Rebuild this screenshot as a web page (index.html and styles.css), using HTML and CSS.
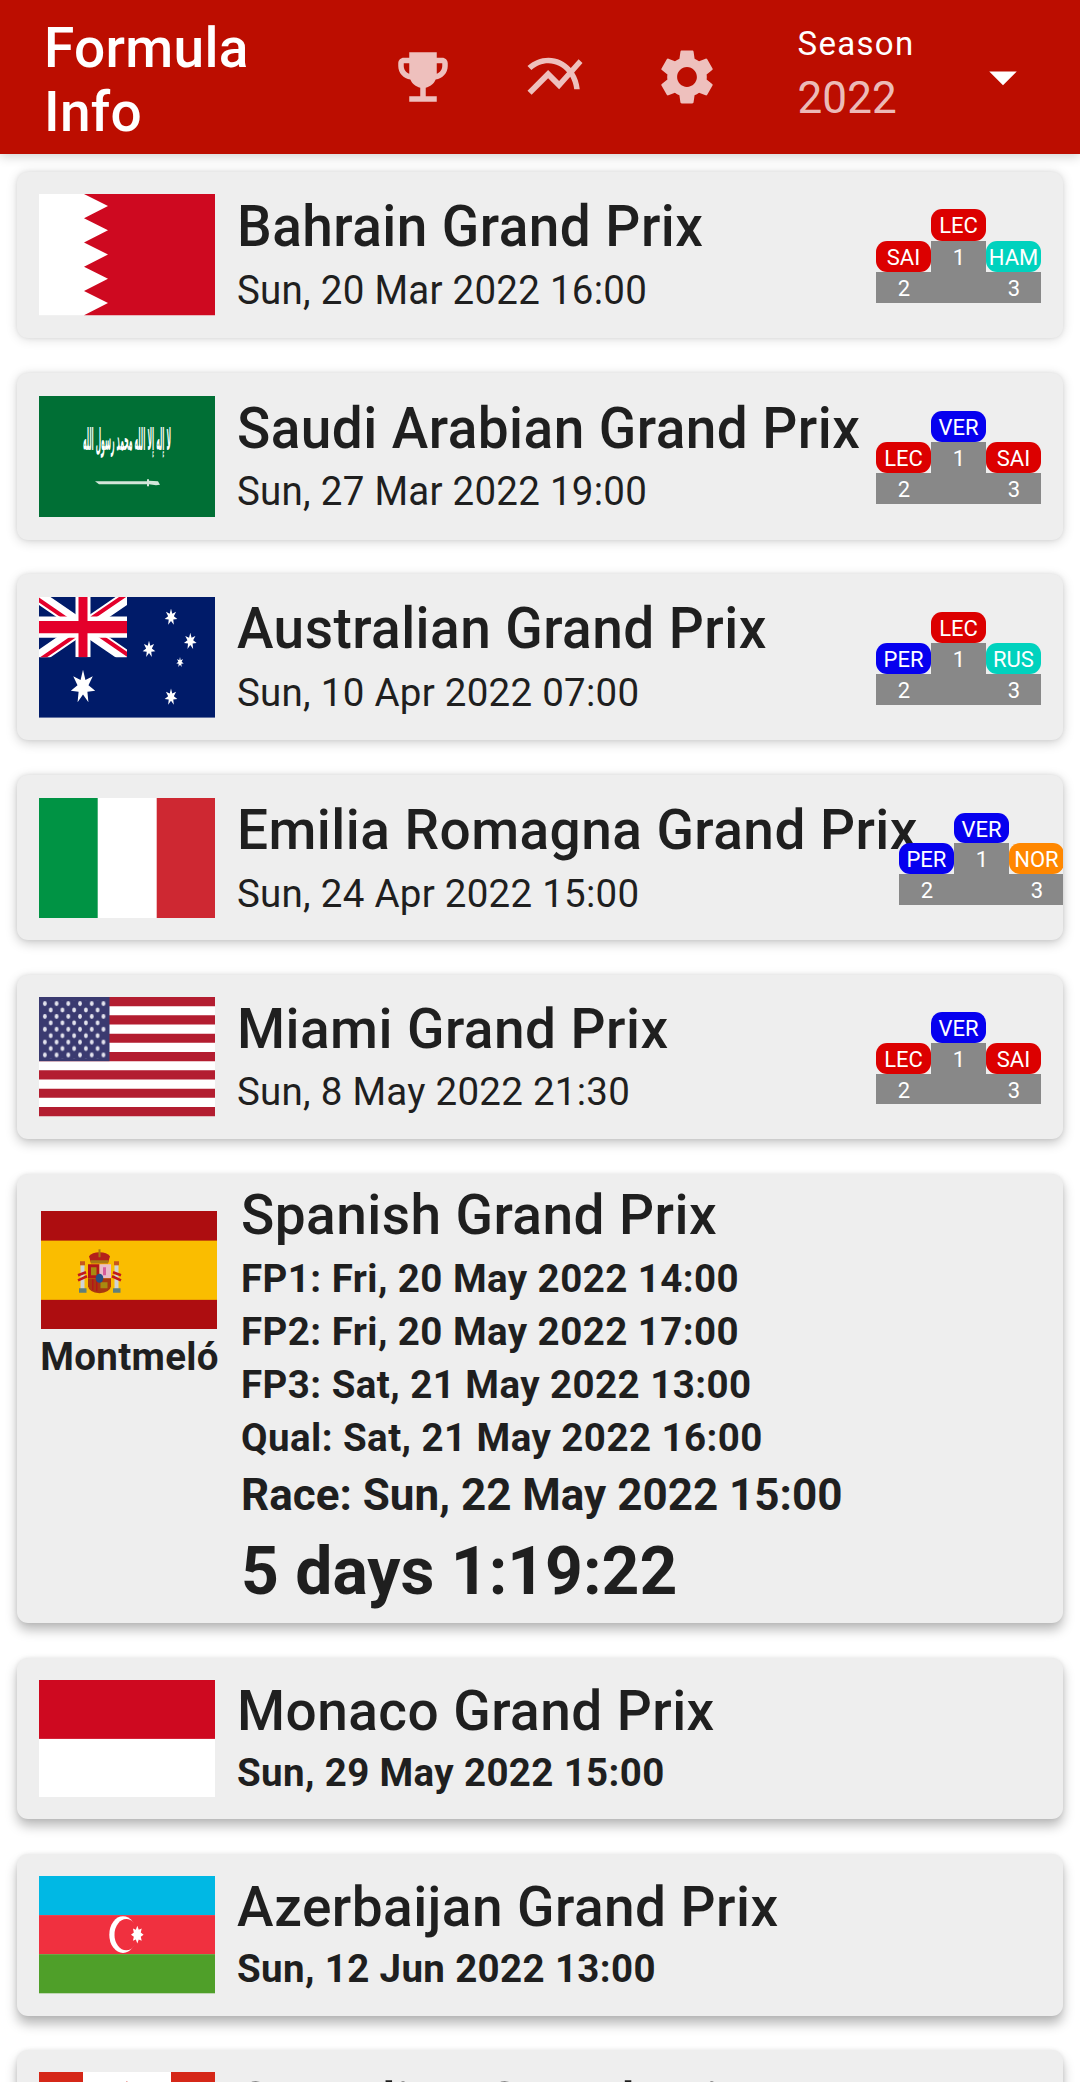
FILE: index.html
```html
<!DOCTYPE html>
<html lang="en">
<head>
<meta charset="utf-8">
<title>Formula Info</title>
<link rel="stylesheet" href="styles.css">
</head>
<body>
<header class="app-bar">
  <h1 class="app-title">Formula<br>Info</h1>
  <nav class="actions">
    <button class="action" aria-label="Standings"><svg class="icon" viewBox="0 0 24 24"><path d="M19 5h-2V3H7v2H5c-1.1 0-2 .9-2 2v1c0 2.55 1.92 4.63 4.39 4.94.63 1.5 1.98 2.63 3.61 2.96V19H7v2h10v-2h-4v-3.1c1.63-.33 2.98-1.46 3.61-2.96C19.08 12.63 21 10.55 21 8V7c0-1.1-.9-2-2-2zM5 8V7h2v3.82C5.84 10.4 5 9.3 5 8zm14 0c0 1.3-.84 2.4-2 2.82V7h2v1z"/></svg></button>
    <button class="action" aria-label="Charts"><svg class="icon" viewBox="0 0 24 24"><path d="M22 6.92l-1.41-1.41-2.85 3.21C15.68 6.4 12.83 5 9.61 5 6.72 5 4.07 6.16 2 8l1.42 1.42C5.12 7.93 7.27 7 9.61 7c2.74 0 5.09 1.26 6.77 3.24l-2.88 3.24-4-4L2 16.99l1.5 1.5 6-6.01 4 4 4.05-4.55c.75 1.35 1.25 2.9 1.44 4.55H21c-.22-2.3-.95-4.39-2.04-6.14L22 6.92z"/></svg></button>
    <button class="action" aria-label="Settings"><svg class="icon" viewBox="0 0 24 24"><path d="M19.14 12.94c.04-.3.06-.61.06-.94 0-.32-.02-.64-.07-.94l2.03-1.58c.18-.14.23-.41.12-.61l-1.92-3.32c-.12-.22-.37-.29-.59-.22l-2.39.96c-.5-.38-1.03-.7-1.62-.94l-.36-2.54c-.04-.24-.24-.41-.48-.41h-3.84c-.24 0-.43.17-.47.41l-.36 2.54c-.59.24-1.13.57-1.62.94l-2.39-.96c-.22-.08-.47 0-.59.22L2.74 8.87c-.12.21-.08.47.12.61l2.03 1.58c-.05.3-.09.63-.09.94s.02.64.07.94l-2.03 1.58c-.18.14-.23.41-.12.61l1.92 3.32c.12.22.37.29.59.22l2.39-.96c.5.38 1.03.7 1.62.94l.36 2.54c.05.24.24.41.48.41h3.84c.24 0 .44-.17.47-.41l.36-2.54c.59-.24 1.13-.56 1.62-.94l2.39.96c.22.08.47 0 .59-.22l1.92-3.32c.12-.22.07-.47-.12-.61l-2.01-1.58zM12 15.6c-1.98 0-3.6-1.62-3.6-3.6s1.62-3.6 3.6-3.6 3.6 1.62 3.6 3.6-1.62 3.6-3.6 3.6z"/></svg></button>
  </nav>
  <div class="season">
    <div class="season-text">
      <span class="season-label">Season</span>
      <span class="season-value">2022</span>
    </div>
    <svg class="icon arrow" viewBox="0 0 24 24"><path d="M7 10l5 5 5-5z"/></svg>
  </div>
</header>

<main class="races">
  <article class="race race-1">
    <svg class="flag" viewBox="0 0 176 120" preserveAspectRatio="none"><rect width="176" height="120" fill="#fff"/><path fill="#ce0920" d="M176 0H45l24 12-24 12 24 12-24 12 24 12-24 12 24 12-24 12 24 12-24 12h131z"/></svg>
    <div class="info"><h2 class="name">Bahrain Grand Prix</h2><p class="date">Sun, 20 Mar 2022 16:00</p></div>
    <div class="podium">
      <span class="driver first ferrari">LEC</span>
      <span class="driver ferrari">SAI</span><span class="step">1</span><span class="driver mercedes">HAM</span>
      <span class="step">2</span><span class="step"></span><span class="step">3</span>
    </div>
  </article>

  <article class="race race-2">
    <svg class="flag" viewBox="0 0 176 120" preserveAspectRatio="none"><rect width="176" height="120" fill="#006f35"/>
      <g transform="translate(88 54) scale(1 2)"><text class="script" textLength="88" lengthAdjust="spacingAndGlyphs">لا إله إلا الله محمد رسول الله</text></g>
      <path fill="#d3e6da" d="M56 84.500h52v-2h2v1.500l9 .5 2 3.500-4 .5-7-1v2h-2v-2H60z"/></svg>
    <div class="info"><h2 class="name">Saudi Arabian Grand Prix</h2><p class="date">Sun, 27 Mar 2022 19:00</p></div>
    <div class="podium">
      <span class="driver first redbull">VER</span>
      <span class="driver ferrari">LEC</span><span class="step">1</span><span class="driver ferrari">SAI</span>
      <span class="step">2</span><span class="step"></span><span class="step">3</span>
    </div>
  </article>

  <article class="race race-3">
    <svg class="flag" viewBox="0 0 176 120" preserveAspectRatio="none">
      <defs><polygon id="star7" points="0,-1 .195,-.405 .782,-.623 .439,-.1 .975,.223 .352,.281 .434,.901 0,.45 -.434,.901 -.352,.281 -.975,.223 -.439,-.1 -.782,-.623 -.195,-.405"/><clipPath id="union"><rect width="88" height="60"/></clipPath></defs>
      <rect width="176" height="120" fill="#001b69"/>
      <g clip-path="url(#union)">
        <path stroke="#fff" stroke-width="13" d="M0 0l88 60M88 0L0 60"/>
        <path stroke="#e4002b" stroke-width="4" d="M-1.500 2l44 30M89.500 58l-44-30M86.500 -2l-44 30M1.500 62l44-30"/>
        <path stroke="#fff" stroke-width="21" d="M0 30h88"/><path stroke="#fff" stroke-width="15" d="M44 0v60"/>
        <path stroke="#e4002b" stroke-width="12" d="M0 30h88"/><path stroke="#e4002b" stroke-width="9" d="M44 0v60"/>
      </g>
      <g fill="#fff">
        <use href="#star7" transform="translate(44 89.500) scale(12.500 17)"/>
        <use href="#star7" transform="translate(132 20) scale(6.500 8.500)"/>
        <use href="#star7" transform="translate(151.300 44) scale(6.500 8.500)"/>
        <use href="#star7" transform="translate(110 52) scale(6.500 8.500)"/>
        <use href="#star7" transform="translate(141 65) scale(3.800 5.300)"/>
        <use href="#star7" transform="translate(132 99.500) scale(6.500 8.500)"/>
      </g></svg>
    <div class="info"><h2 class="name">Australian Grand Prix</h2><p class="date">Sun, 10 Apr 2022 07:00</p></div>
    <div class="podium">
      <span class="driver first ferrari">LEC</span>
      <span class="driver redbull">PER</span><span class="step">1</span><span class="driver mercedes">RUS</span>
      <span class="step">2</span><span class="step"></span><span class="step">3</span>
    </div>
  </article>

  <article class="race race-4">
    <svg class="flag" viewBox="0 0 176 120" preserveAspectRatio="none"><rect width="176" height="120" fill="#fff"/><path fill="#009344" d="M0 0h58.700v120H0z"/><path fill="#ce2832" d="M117.700 0H176v120h-58.300z"/></svg>
    <div class="info"><h2 class="name">Emilia Romagna Grand Prix</h2><p class="date">Sun, 24 Apr 2022 15:00</p></div>
    <div class="podium">
      <span class="driver first redbull">VER</span>
      <span class="driver redbull">PER</span><span class="step">1</span><span class="driver mclaren">NOR</span>
      <span class="step">2</span><span class="step"></span><span class="step">3</span>
    </div>
  </article>

  <article class="race race-5">
    <svg class="flag" viewBox="0 0 176 120" preserveAspectRatio="none">
      <defs><pattern id="stars" width="11.720" height="12.930" y=".2" patternUnits="userSpaceOnUse"><g fill="#e4e4ee"><ellipse cx="5.860" cy="6.460" rx="1.900" ry="2.400"/><ellipse cx="0" cy="0" rx="1.900" ry="2.400"/><ellipse cx="11.720" cy="0" rx="1.900" ry="2.400"/><ellipse cx="0" cy="12.930" rx="1.900" ry="2.400"/><ellipse cx="11.720" cy="12.930" rx="1.900" ry="2.400"/></g></pattern></defs>
      <rect width="176" height="120" fill="#fff"/>
      <path stroke="#b31d30" stroke-width="9.230" d="M0 4.615h176M0 23.077h176M0 41.538h176M0 60h176M0 78.462h176M0 96.923h176M0 115.385h176"/>
      <rect width="70.500" height="64.600" fill="#3a3a70"/><rect x="3" y="3" width="65" height="59" fill="url(#stars)"/></svg>
    <div class="info"><h2 class="name">Miami Grand Prix</h2><p class="date">Sun, 8 May 2022 21:30</p></div>
    <div class="podium">
      <span class="driver first redbull">VER</span>
      <span class="driver ferrari">LEC</span><span class="step">1</span><span class="driver ferrari">SAI</span>
      <span class="step">2</span><span class="step"></span><span class="step">3</span>
    </div>
  </article>

  <article class="race next">
    <div class="place">
      <svg class="flag" viewBox="0 0 176 118" preserveAspectRatio="none"><rect width="176" height="118" fill="#ad0d10"/><rect y="29.500" width="176" height="59" fill="#fabd00"/>
        <path fill="#cfd3d6" d="M39.500 54h4v24h-4zM73.500 54h4v24h-4z"/>
        <path fill="#5f7f7b" d="M38 77h7.500v4.500H38zM72 77h7.500v4.500H72z"/>
        <path fill="#c8581a" d="M39 50h5v4h-5zM73 50h5v4h-5z"/>
        <path fill="none" stroke="#c21a1c" stroke-width="2.500" d="M37 64l8-3M37 69l9-4M80 64l-8-3M80 69l-9-4"/>
        <path fill="#b3161a" d="M47 53h11.500v14H47z"/><path fill="#e9bcc8" d="M58.500 53H70v14H58.500z"/>
        <path fill="#a8380f" d="M47 67h23v8q-1 6-11.500 7Q48 81 47 75z"/><path fill="#a88a10" d="M50 56h5.500v8H50zM59.500 71h7v6h-7z"/><path fill="#b3161a" d="M51 68h1.500v11H51zM55 68h1.500v12H55z"/><path fill="#d65b9b" d="M62 56h3v8h-3z"/>
        <ellipse cx="58.500" cy="67" rx="3.800" ry="4.500" fill="#244f86"/>
        <path fill="#b3201b" d="M48 45q3-4 10.500-4T69 45l-2 7H50z"/><path fill="#a87912" d="M49.500 49h18l-.5 3h-17zM57.500 38h2v8h-2z"/></svg>
      <span class="city">Montmeló</span>
    </div>
    <div class="sessions">
      <h2 class="name">Spanish Grand Prix</h2>
      <p class="session">FP1: Fri, 20 May 2022 14:00</p>
      <p class="session">FP2: Fri, 20 May 2022 17:00</p>
      <p class="session">FP3: Sat, 21 May 2022 13:00</p>
      <p class="session">Qual: Sat, 21 May 2022 16:00</p>
      <p class="race-start">Race: Sun, 22 May 2022 15:00</p>
      <p class="countdown">5 days 1:19:22</p>
    </div>
  </article>

  <article class="race upcoming race-7">
    <svg class="flag" viewBox="0 0 176 118" preserveAspectRatio="none"><rect width="176" height="118" fill="#fff"/><rect width="176" height="59" fill="#ce0920"/></svg>
    <div class="info"><h2 class="name">Monaco Grand Prix</h2><p class="date">Sun, 29 May 2022 15:00</p></div>
  </article>

  <article class="race upcoming race-8">
    <svg class="flag" viewBox="0 0 176 117" preserveAspectRatio="none"><rect width="176" height="39" fill="#00b8e4"/><rect y="39" width="176" height="39" fill="#f0303f"/><rect y="78" width="176" height="39" fill="#4f9f29"/>
      <ellipse cx="84" cy="58.500" rx="13.700" ry="18.300" fill="#fff"/><ellipse cx="87.300" cy="58.500" rx="11.800" ry="15.500" fill="#f0303f"/>
      <polygon fill="#fff" transform="translate(98.300 58.500) scale(6.300 8.800)" points="0,-1 .23,-.55 .7,-.7 .55,-.23 1,0 .55,.23 .7,.7 .23,.55 0,1 -.23,.55 -.7,.7 -.55,.23 -1,0 -.55,-.23 -.7,-.7 -.23,-.55"/></svg>
    <div class="info"><h2 class="name">Azerbaijan Grand Prix</h2><p class="date">Sun, 12 Jun 2022 13:00</p></div>
  </article>

  <article class="race upcoming race-9">
    <svg class="flag" viewBox="0 0 176 117" preserveAspectRatio="none"><rect width="176" height="117" fill="#d52718"/><rect x="44" width="88" height="117" fill="#fff"/><path fill="#d52718" d="M88 9l6 13 7-4-3 24 11-12 2 7 12-3-4 14 5 3-22 20 2 7-17-3v20h-2V75l-17 3 2-7-22-20 5-3-4-14 12 3 2-7 11 12-3-24 7 4z"/></svg>
    <div class="info"><h2 class="name">Canadian Grand Prix</h2></div>
  </article>
</main>
</body>
</html>
```
FILE: styles.css
```css
* { box-sizing: border-box; }

html, body { height: 100%; }

body {
  margin: 0;
  overflow: hidden;
  display: flex;
  flex-direction: column;
  background: #fff;
  color: #1f1f1f;
  font-family: Roboto, "Liberation Sans", sans-serif;
}

h1, h2, p { margin: 0; }

/* App bar */
.app-bar {
  position: relative;
  z-index: 1;
  flex: none;
  display: flex;
  align-items: center;
  height: 154px;
  padding-left: 44px;
  background: #bc0d00;
  color: #fff;
  box-shadow: 0 2px 11px rgba(0, 0, 0, .2);
}

.app-title {
  width: 313px;
  padding-top: 6px;
  font-size: 55px;
  font-weight: 500;
  line-height: 64.4px;
  letter-spacing: .3px;
}

.actions { display: flex; }

.action {
  display: flex;
  justify-content: center;
  width: 132px;
  padding: 0;
  border: 0;
  background: none;
  color: rgba(255, 255, 255, .74);
}

.icon {
  display: block;
  width: 66px;
  height: 66px;
  fill: currentColor;
}

.season {
  display: flex;
  align-items: center;
  justify-content: space-between;
  width: 283px;
  padding-left: 44.500px;
}

.season-text {
  display: flex;
  flex-direction: column;
  gap: 6px;
  margin-bottom: 8px;
}

.season-label {
  font-size: 33px;
  line-height: 44px;
  letter-spacing: 1.300px;
}

.season-value {
  font-size: 44px;
  line-height: 52px;
  letter-spacing: .1px;
  color: rgba(255, 255, 255, .74);
}

/* Race list */
.races {
  flex: none;
  display: flex;
  flex-direction: column;
  gap: 34.800px;
  padding: 17.600px 17px 0;
}

.race {
  --s: 1;
  --drop: 4px;
  --dark: .2;
  flex: none;
  display: flex;
  align-items: flex-start;
  height: calc(161.300px * var(--s));
  padding: calc(22px * var(--s)) 0 0 22px;
  overflow: hidden;
  border-radius: 11px;
  background: #eee;
  box-shadow: 0 var(--drop) 12px rgba(0, 0, 0, var(--dark)), 0 0 4px rgba(0, 0, 0, .08);
}

.race-1 { --s: 1.0335; --drop: 1px; --dark: .14; }
.race-2 { --s: 1.032; --drop: 2px; --dark: .16; }
.race-3 { --s: 1.028; --drop: 3px; --dark: .18; }
.race-4 { --s: 1.025; --drop: 3px; --dark: .22; }
.race-5 { --s: 1.016; --drop: 4px; --dark: .23; }
.race-7 { --s: 1.004; --drop: 7px; --dark: .27; }
.race-8 { --drop: 8px; --dark: .28; }
.race-9 { --drop: 8px; --dark: .28; }

.flag {
  flex: none;
  display: block;
  width: 176px;
  height: calc(117.300px * var(--s));
}

.script {
  fill: #fff;
  font-family: "DejaVu Sans", sans-serif;
  font-size: 15px;
  font-weight: 700;
  text-anchor: middle;
}

.info {
  flex: 1 0 auto;
  padding-left: 22px;
  transform: scaleY(var(--s));
  transform-origin: 0 0;
  white-space: nowrap;
}

.name {
  margin-top: -1.500px;
  font-size: 55px;
  font-weight: 500;
  line-height: 65px;
  letter-spacing: .44px;
}

.date {
  margin-top: 5px;
  font-size: 38.500px;
  line-height: 48px;
  letter-spacing: .26px;
}

.upcoming .date {
  font-weight: 700;
  letter-spacing: .36px;
}

/* Podium */
.podium {
  position: relative;
  z-index: 1;
  flex: none;
  display: grid;
  grid-template-columns: repeat(3, 55px);
  grid-auto-rows: calc(30.200px * var(--s));
  margin: 15px 22px 0 -19px;
  color: #fff;
  font-size: 22px;
  line-height: 34.500px;
  text-align: center;
}

.first { grid-column: 2; }
.first + .driver { grid-column: 1; }

.driver { border-radius: 11px; }

.step {
  padding-left: 1px;
  background: #888;
}

.ferrari { background: #dc0000; }
.redbull { background: #0600ef; }
.mercedes { background: #00d2be; }
.mclaren { background: #ff8700; }

/* Next race */
.next {
  --s: 1.01;
  --drop: 7px;
  --dark: .27;
  height: 449px;
  padding-top: 0;
}

.place {
  display: flex;
  flex-direction: column;
  align-items: center;
  width: 180px;
  padding-top: 37px;
}

.city {
  margin-top: 1px;
  padding-left: 1px;
  font-size: 38.500px;
  font-weight: 700;
  line-height: 53px;
  letter-spacing: .3px;
}

.sessions {
  padding: 11px 0 0 22px;
  white-space: nowrap;
}

.session {
  font-size: 38.500px;
  font-weight: 700;
  line-height: 53px;
  letter-spacing: .44px;
}

.name + .session { margin-top: 3.500px; }

.race-start {
  font-size: 44px;
  font-weight: 700;
  line-height: 63px;
}

.countdown {
  font-size: 66px;
  font-weight: 700;
  line-height: 90px;
}
```
